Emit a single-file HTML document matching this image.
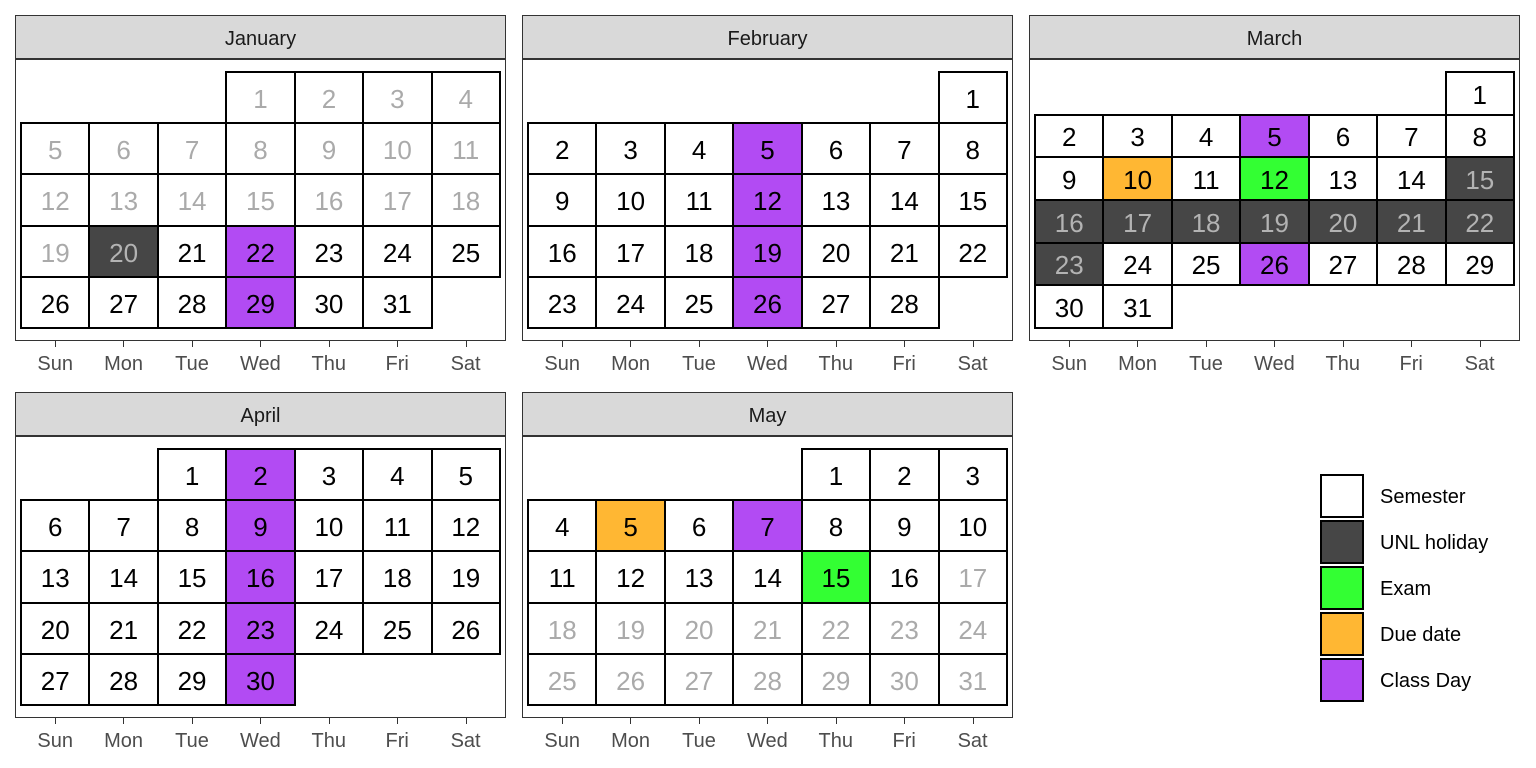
<!DOCTYPE html><html><head><style>
body{margin:0;width:1536px;height:768px;background:#fff;font-family:"Liberation Sans",Arial,sans-serif;position:relative;overflow:hidden}
.s{position:absolute;height:44px;background:#d9d9d9;border:1px solid #333;box-sizing:border-box;width:491px;text-align:center;line-height:46px;font-size:20px;color:#1a1a1a}
.p{position:absolute;width:491px;height:282px;border:1px solid #333;box-sizing:border-box}
.g{position:absolute;width:479px;height:256px;display:grid;grid-template-columns:repeat(7,1fr)}
.g div{box-shadow:0 0 0 1px #000;outline:1px solid #000;outline-offset:-1px;display:flex;align-items:center;justify-content:center;font-size:26px;color:#000;background:#fff;padding-top:4px;box-sizing:border-box}
.g div.b{box-shadow:none;outline:none;background:transparent}
.g div.x{color:#aaa}
.g div.h{background:#464646;color:#b3b3b3}
.g div.q{background:#b24bf3}
.g div.o{background:#ffb733}
.g div.e{background:#33ff33}
.ax{position:absolute;width:479px;height:40px}
.ax span{position:absolute;width:68.4px;text-align:center;font-size:20px;color:#4d4d4d;top:12px}
.ax i{position:absolute;width:1px;height:6px;background:#333;top:0}
.lg{position:absolute;left:1320px;width:44px;height:44px;box-sizing:border-box;border:2px solid #000}
.lt{position:absolute;left:1380px;font-size:20px;color:#000}
</style></head><body>
<div class="s" style="left:15px;top:15px">January</div>
<div class="s" style="left:522px;top:15px">February</div>
<div class="s" style="left:1029px;top:15px">March</div>
<div class="s" style="left:15px;top:392px">April</div>
<div class="s" style="left:522px;top:392px">May</div>
<div class="p" style="left:15px;top:59px"></div>
<div class="p" style="left:522px;top:59px"></div>
<div class="p" style="left:1029px;top:59px"></div>
<div class="p" style="left:15px;top:436px"></div>
<div class="p" style="left:522px;top:436px"></div>

<div class="g" style="left:21px;top:72px;grid-template-rows:repeat(5,1fr)">
<div class="b"></div><div class="b"></div><div class="b"></div><div class="x">1</div><div class="x">2</div><div class="x">3</div><div class="x">4</div>
<div class="x">5</div><div class="x">6</div><div class="x">7</div><div class="x">8</div><div class="x">9</div><div class="x">10</div><div class="x">11</div>
<div class="x">12</div><div class="x">13</div><div class="x">14</div><div class="x">15</div><div class="x">16</div><div class="x">17</div><div class="x">18</div>
<div class="x">19</div><div class="h">20</div><div>21</div><div class="q">22</div><div>23</div><div>24</div><div>25</div>
<div>26</div><div>27</div><div>28</div><div class="q">29</div><div>30</div><div>31</div><div class="b"></div>
</div>

<div class="g" style="left:528px;top:72px;grid-template-rows:repeat(5,1fr)">
<div class="b"></div><div class="b"></div><div class="b"></div><div class="b"></div><div class="b"></div><div class="b"></div><div>1</div>
<div>2</div><div>3</div><div>4</div><div class="q">5</div><div>6</div><div>7</div><div>8</div>
<div>9</div><div>10</div><div>11</div><div class="q">12</div><div>13</div><div>14</div><div>15</div>
<div>16</div><div>17</div><div>18</div><div class="q">19</div><div>20</div><div>21</div><div>22</div>
<div>23</div><div>24</div><div>25</div><div class="q">26</div><div>27</div><div>28</div><div class="b"></div>
</div>

<div class="g" style="left:1035px;top:72px;grid-template-rows:repeat(6,1fr)">
<div class="b"></div><div class="b"></div><div class="b"></div><div class="b"></div><div class="b"></div><div class="b"></div><div>1</div>
<div>2</div><div>3</div><div>4</div><div class="q">5</div><div>6</div><div>7</div><div>8</div>
<div>9</div><div class="o">10</div><div>11</div><div class="e">12</div><div>13</div><div>14</div><div class="h">15</div>
<div class="h">16</div><div class="h">17</div><div class="h">18</div><div class="h">19</div><div class="h">20</div><div class="h">21</div><div class="h">22</div>
<div class="h">23</div><div>24</div><div>25</div><div class="q">26</div><div>27</div><div>28</div><div>29</div>
<div>30</div><div>31</div><div class="b"></div>
</div>

<div class="g" style="left:21px;top:449px;grid-template-rows:repeat(5,1fr)">
<div class="b"></div><div class="b"></div><div>1</div><div class="q">2</div><div>3</div><div>4</div><div>5</div>
<div>6</div><div>7</div><div>8</div><div class="q">9</div><div>10</div><div>11</div><div>12</div>
<div>13</div><div>14</div><div>15</div><div class="q">16</div><div>17</div><div>18</div><div>19</div>
<div>20</div><div>21</div><div>22</div><div class="q">23</div><div>24</div><div>25</div><div>26</div>
<div>27</div><div>28</div><div>29</div><div class="q">30</div><div class="b"></div>
</div>

<div class="g" style="left:528px;top:449px;grid-template-rows:repeat(5,1fr)">
<div class="b"></div><div class="b"></div><div class="b"></div><div class="b"></div><div>1</div><div>2</div><div>3</div>
<div>4</div><div class="o">5</div><div>6</div><div class="q">7</div><div>8</div><div>9</div><div>10</div>
<div>11</div><div>12</div><div>13</div><div>14</div><div class="e">15</div><div>16</div><div class="x">17</div>
<div class="x">18</div><div class="x">19</div><div class="x">20</div><div class="x">21</div><div class="x">22</div><div class="x">23</div><div class="x">24</div>
<div class="x">25</div><div class="x">26</div><div class="x">27</div><div class="x">28</div><div class="x">29</div><div class="x">30</div><div class="x">31</div>
</div>

<div class="ax" style="left:21px;top:341px"><i style="left:34px"></i><i style="left:102px"></i><i style="left:171px"></i><i style="left:239px"></i><i style="left:308px"></i><i style="left:376px"></i><i style="left:445px"></i><span style="left:0">Sun</span><span style="left:68.4px">Mon</span><span style="left:136.8px">Tue</span><span style="left:205.2px">Wed</span><span style="left:273.6px">Thu</span><span style="left:342px">Fri</span><span style="left:410.4px">Sat</span></div>
<div class="ax" style="left:528px;top:341px"><i style="left:34px"></i><i style="left:102px"></i><i style="left:171px"></i><i style="left:239px"></i><i style="left:308px"></i><i style="left:376px"></i><i style="left:445px"></i><span style="left:0">Sun</span><span style="left:68.4px">Mon</span><span style="left:136.8px">Tue</span><span style="left:205.2px">Wed</span><span style="left:273.6px">Thu</span><span style="left:342px">Fri</span><span style="left:410.4px">Sat</span></div>
<div class="ax" style="left:1035px;top:341px"><i style="left:34px"></i><i style="left:102px"></i><i style="left:171px"></i><i style="left:239px"></i><i style="left:308px"></i><i style="left:376px"></i><i style="left:445px"></i><span style="left:0">Sun</span><span style="left:68.4px">Mon</span><span style="left:136.8px">Tue</span><span style="left:205.2px">Wed</span><span style="left:273.6px">Thu</span><span style="left:342px">Fri</span><span style="left:410.4px">Sat</span></div>
<div class="ax" style="left:21px;top:718px"><i style="left:34px"></i><i style="left:102px"></i><i style="left:171px"></i><i style="left:239px"></i><i style="left:308px"></i><i style="left:376px"></i><i style="left:445px"></i><span style="left:0">Sun</span><span style="left:68.4px">Mon</span><span style="left:136.8px">Tue</span><span style="left:205.2px">Wed</span><span style="left:273.6px">Thu</span><span style="left:342px">Fri</span><span style="left:410.4px">Sat</span></div>
<div class="ax" style="left:528px;top:718px"><i style="left:34px"></i><i style="left:102px"></i><i style="left:171px"></i><i style="left:239px"></i><i style="left:308px"></i><i style="left:376px"></i><i style="left:445px"></i><span style="left:0">Sun</span><span style="left:68.4px">Mon</span><span style="left:136.8px">Tue</span><span style="left:205.2px">Wed</span><span style="left:273.6px">Thu</span><span style="left:342px">Fri</span><span style="left:410.4px">Sat</span></div>

<div class="lg" style="top:474px;background:#fff"></div>
<div class="lg" style="top:520px;background:#464646"></div>
<div class="lg" style="top:566px;background:#33ff33"></div>
<div class="lg" style="top:612px;background:#ffb733"></div>
<div class="lg" style="top:658px;background:#b24bf3"></div>
<div class="lt" style="top:486px">Semester</div>
<div class="lt" style="top:532px">UNL holiday</div>
<div class="lt" style="top:578px">Exam</div>
<div class="lt" style="top:624px">Due date</div>
<div class="lt" style="top:670px">Class Day</div>
</body></html>
